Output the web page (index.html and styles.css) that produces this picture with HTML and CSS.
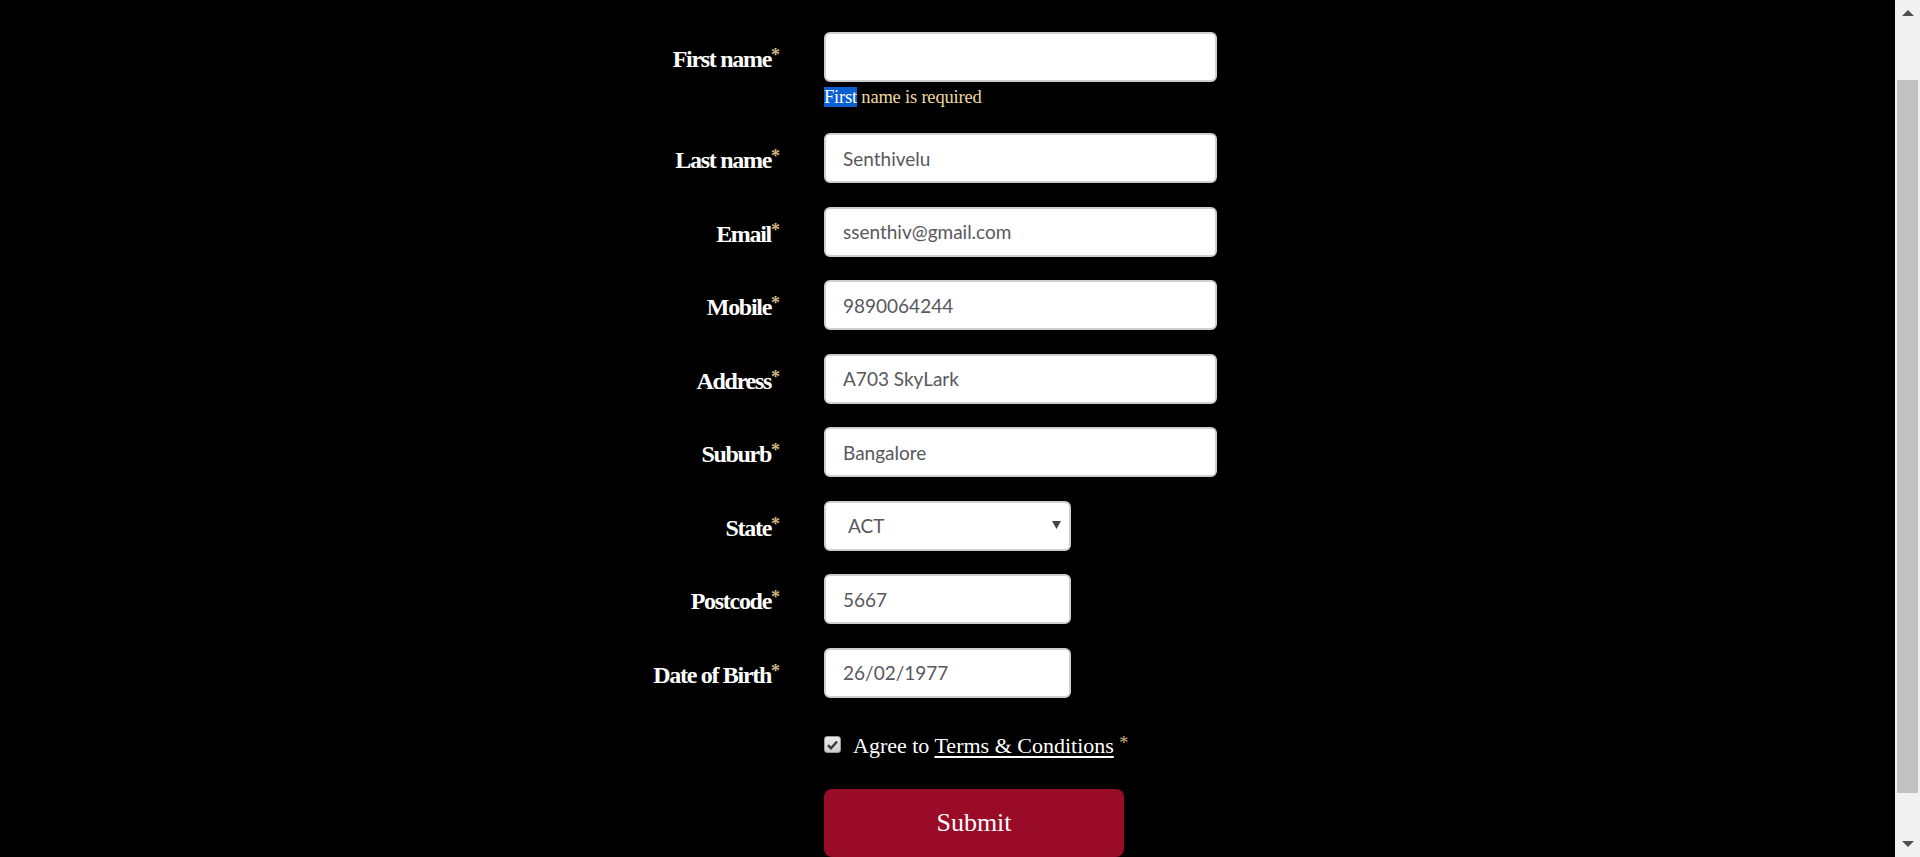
FILE: index.html
```html
<!DOCTYPE html>
<html lang="en">
<head>
<meta charset="utf-8">
<title>Registration</title>
<link rel="stylesheet" href="styles.css">
</head>
<body>
<div class="page">
  <form class="form">
    <div class="row row-first">
      <label class="label">First name<span class="req">*</span></label>
      <div class="field">
        <input class="input" type="text" value="">
        <div class="error"><span class="sel">First</span> name is required</div>
      </div>
    </div>
    <div class="row">
      <label class="label">Last name<span class="req">*</span></label>
      <div class="field"><input class="input" type="text" value="Senthivelu"></div>
    </div>
    <div class="row">
      <label class="label">Email<span class="req">*</span></label>
      <div class="field"><input class="input" type="text" value="ssenthiv@gmail.com"></div>
    </div>
    <div class="row">
      <label class="label">Mobile<span class="req">*</span></label>
      <div class="field"><input class="input" type="text" value="9890064244"></div>
    </div>
    <div class="row">
      <label class="label">Address<span class="req">*</span></label>
      <div class="field"><input class="input" type="text" value="A703 SkyLark"></div>
    </div>
    <div class="row">
      <label class="label">Suburb<span class="req">*</span></label>
      <div class="field"><input class="input" type="text" value="Bangalore"></div>
    </div>
    <div class="row">
      <label class="label">State<span class="req">*</span></label>
      <div class="field">
        <div class="select-wrap">
          <select class="select"><option>ACT</option></select>
          <svg class="select-arrow" width="9" height="8" viewBox="0 0 9 8"><path d="M0 0H9L4.5 8Z" fill="#444"/></svg>
        </div>
      </div>
    </div>
    <div class="row">
      <label class="label">Postcode<span class="req">*</span></label>
      <div class="field"><input class="input input-short" type="text" value="5667"></div>
    </div>
    <div class="row row-dob">
      <label class="label">Date of Birth<span class="req">*</span></label>
      <div class="field"><input class="input input-short" type="text" value="26/02/1977"></div>
    </div>
    <div class="row row-agree">
      <div class="spacer"></div>
      <div class="agree">
        <span class="checkbox">
          <svg width="11" height="10" viewBox="0 0 11 10"><path d="M1 5.2L4 8.3L10 1.5" fill="none" stroke="#3a3a3a" stroke-width="2.4"/></svg>
        </span>
        <span class="agree-text">Agree to <a class="terms" href="#">Terms &amp; Conditions</a> <span class="req-small">*</span></span>
      </div>
    </div>
    <div class="row row-submit">
      <div class="spacer"></div>
      <button class="submit" type="button">Submit</button>
    </div>
  </form>
</div>
<div class="scrollbar">
  <div class="sb-arrow sb-up"></div>
  <div class="sb-track"><div class="sb-thumb"></div></div>
  <div class="sb-arrow sb-down"></div>
</div>
</body>
</html>
```
FILE: styles.css
```css
html, body {
  margin: 0;
  padding: 0;
  height: 857px;
  overflow: hidden;
  background: #000;
}
body {
  display: flex;
  font-family: "Liberation Serif", serif;
  color: #fff;
}
.page {
  flex: 1;
  height: 857px;
  overflow: hidden;
}
.form {
  padding-top: 32px;
  padding-left: 480px;
}
.row {
  display: flex;
  align-items: flex-start;
  margin-bottom: 23.5px;
}
.row-first {
  margin-bottom: 26px;
}
.row-dob {
  margin-bottom: 34px;
}
.row-agree {
  margin-bottom: 31px;
}
.spacer {
  width: 344px;
  flex: none;
}
.label {
  width: 300px;
  flex: none;
  padding-right: 44px;
  text-align: right;
  font-weight: bold;
  font-size: 24px;
  letter-spacing: -1.3px;
  line-height: 46px;
  height: 50px;
  color: #fff;
}
.req {
  color: #d2b780;
  font-size: 18px;
  vertical-align: 6px;
  letter-spacing: 0;
}
.field {
  width: 393px;
}
.input {
  display: block;
  box-sizing: border-box;
  width: 393px;
  height: 50px;
  margin: 0;
  padding: 0 17px;
  border: 2px solid #cfcfcf;
  border-radius: 6px;
  background: #fff;
  font-family: Lato, "Open Sans", sans-serif;
  font-size: 19px;
  color: #58585e;
  outline: none;
}
.input-short {
  width: 247px;
}
.error {
  margin-top: 5px;
  font-size: 18.5px;
  line-height: 20px;
  height: 20px;
  color: #efd9a0;
  letter-spacing: -0.2px;
}
.sel {
  background: #0a5fd3;
  color: #fff;
}
.select-wrap {
  position: relative;
  width: 247px;
  height: 50px;
}
.select {
  display: block;
  box-sizing: border-box;
  width: 247px;
  height: 50px;
  margin: 0;
  padding: 0 0 0 22px;
  border: 2px solid #cfcfcf;
  border-radius: 6px;
  background: #fff;
  -webkit-appearance: none;
  appearance: none;
  font-family: Lato, "Open Sans", sans-serif;
  font-size: 19px;
  color: #58585e;
  outline: none;
}
.select-arrow {
  position: absolute;
  left: 228px;
  top: 20px;
}
.agree {
  display: flex;
  align-items: center;
  height: 26px;
}
.checkbox {
  box-sizing: border-box;
  width: 17px;
  height: 17px;
  border: 1px solid #9a9a9a;
  border-radius: 3px;
  background: linear-gradient(#ececec, #cfcfcf);
  display: flex;
  align-items: center;
  justify-content: center;
  margin-right: 12px;
}
.agree-text {
  font-size: 22px;
  line-height: 26px;
  color: #fff;
}
.terms {
  color: #fff;
  text-decoration: underline;
  text-underline-offset: 3px;
  text-decoration-thickness: 2px;
}
.req-small {
  color: #d2b780;
  font-size: 18px;
  vertical-align: 4px;
}
.submit {
  width: 300px;
  height: 68px;
  margin: 0;
  border: none;
  border-radius: 8px;
  background: #990b26;
  color: #fff;
  font-family: "Liberation Serif", serif;
  font-size: 26px;
  cursor: pointer;
}
.scrollbar {
  width: 25px;
  flex: none;
  height: 857px;
  background: #f1f1f1;
  display: flex;
  flex-direction: column;
  align-items: center;
}
.sb-arrow {
  width: 0;
  height: 0;
  border-left: 6px solid transparent;
  border-right: 6px solid transparent;
}
.sb-up {
  margin-top: 10px;
  border-bottom: 6px solid #505050;
}
.sb-track {
  flex: 1;
  width: 100%;
  padding-top: 64px;
  box-sizing: border-box;
}
.sb-thumb {
  margin-left: 2px;
  width: 21px;
  height: 713px;
  background: #c1c1c1;
}
.sb-down {
  margin-bottom: 10px;
  border-top: 6px solid #505050;
}
```
